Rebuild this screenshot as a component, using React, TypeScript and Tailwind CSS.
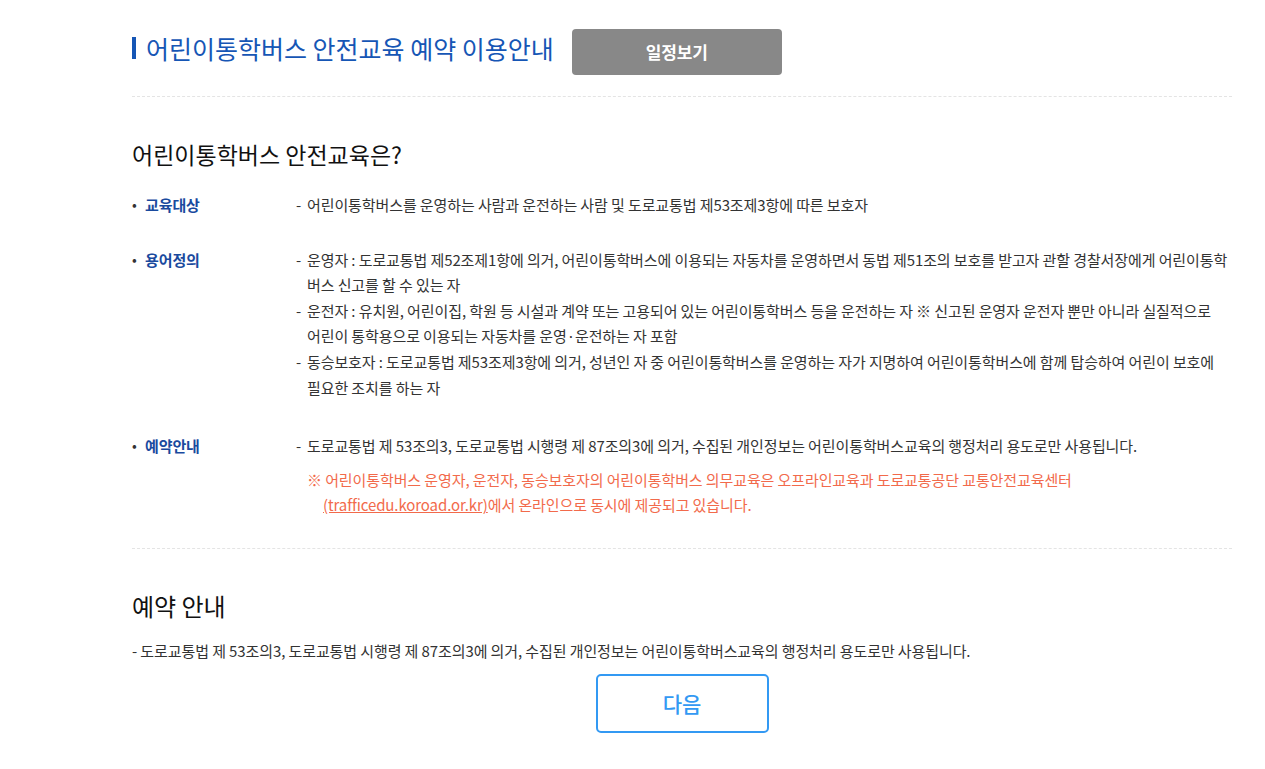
const font = { fontFamily: '"Noto Sans CJK KR", "Noto Sans", sans-serif' };

function Dash({ children, keep }: { children: React.ReactNode; keep?: boolean }) {
  return (
    <div className="flex">
      <span className="w-[11px] shrink-0">-</span>
      <span className={keep ? 'flex-1 break-keep' : 'flex-1'}>{children}</span>
    </div>
  );
}

function InfoRow({ label, children }: { label: string; children: React.ReactNode }) {
  return (
    <div className="flex text-[15px] leading-[25.6px]">
      <div className="flex w-[164px] shrink-0">
        <span className="w-[13px] shrink-0 text-[14px] text-[#333]">•</span>
        <span className="font-bold text-[#1a4a9e]">{label}</span>
      </div>
      <div className="flex-1 text-[#333]">{children}</div>
    </div>
  );
}

export default function App() {
  return (
    <div className="min-h-screen bg-white tracking-[-0.1px]" style={font}>
      <div className="ml-[132px] w-[1100px] pt-[29px]">
        {/* Page title */}
        <div className="flex items-start">
          <div className="mt-[8px] h-[22px] w-[4px] bg-[#1656b5]" />
          <h1 className="ml-[10px] text-[25px] leading-[38px] tracking-normal text-[#1656b5]">
            어린이통학버스 안전교육 예약 이용안내
          </h1>
          <button className="ml-[18px] h-[46px] w-[210px] rounded-[4px] bg-[#888888] text-[17px] font-bold text-white">
            일정보기
          </button>
        </div>

        <div className="mt-[21px] border-t border-dashed border-[#e4e4e4]" />

        {/* About */}
        <h2 className="mt-[38px] text-[23px] leading-[38px] tracking-normal text-[#111]">어린이통학버스 안전교육은?</h2>

        <div className="mt-[19px] flex flex-col gap-[29px]">
          <InfoRow label="교육대상">
            <Dash>어린이통학버스를 운영하는 사람과 운전하는 사람 및 도로교통법 제53조제3항에 따른 보호자</Dash>
          </InfoRow>
          <InfoRow label="용어정의">
            <Dash>
              운영자 : 도로교통법 제52조제1항에 의거, 어린이통학버스에 이용되는 자동차를 운영하면서 동법 제51조의 보호를 받고자 관할 경찰서장에게 어린이통학버스 신고를 할 수 있는 자
            </Dash>
            <Dash keep>
              운전자 : 유치원, 어린이집, 학원 등 시설과 계약 또는 고용되어 있는 어린이통학버스 등을 운전하는 자 ※ 신고된 운영자 운전자 뿐만 아니라 실질적으로 어린이 통학용으로 이용되는 자동차를 운영·운전하는 자 포함
            </Dash>
            <Dash keep>
              동승보호자 : 도로교통법 제53조제3항에 의거, 성년인 자 중 어린이통학버스를 운영하는 자가 지명하여 어린이통학버스에 함께 탑승하여 어린이 보호에 필요한 조치를 하는 자
            </Dash>
          </InfoRow>
          <div className="mt-[4px]">
            <InfoRow label="예약안내">
              <Dash>
                도로교통법 제 53조의3, 도로교통법 시행령 제 87조의3에 의거, 수집된 개인정보는 어린이통학버스교육의 행정처리 용도로만 사용됩니다.
              </Dash>
              <p className="mt-[8px] ml-[11px] pl-[16px] -indent-[16px] text-[#f26a4b]">
                ※ 어린이통학버스 운영자, 운전자, 동승보호자의 어린이통학버스 의무교육은 오프라인교육과 도로교통공단 교통안전교육센터
                <br />
                <span className="underline">(trafficedu.koroad.or.kr)</span>에서 온라인으로 동시에 제공되고 있습니다.
              </p>
            </InfoRow>
          </div>
        </div>

        <div className="mt-[30px] border-t border-dashed border-[#e4e4e4]" />

        {/* Reservation */}
        <h2 className="mt-[40px] text-[24px] leading-[34px] tracking-normal text-[#111]">예약 안내</h2>
        <p className="mt-[15px] text-[15px] leading-[25px] text-[#333]">
          - 도로교통법 제 53조의3, 도로교통법 시행령 제 87조의3에 의거, 수집된 개인정보는 어린이통학버스교육의 행정처리 용도로만 사용됩니다.
        </p>
        <div className="mt-[11px] flex justify-center">
          <button className="h-[59px] w-[173px] rounded-[5px] border-2 border-[#3399f3] text-[21px] font-medium text-[#3399f3]">
            다음
          </button>
        </div>
      </div>
    </div>
  );
}
